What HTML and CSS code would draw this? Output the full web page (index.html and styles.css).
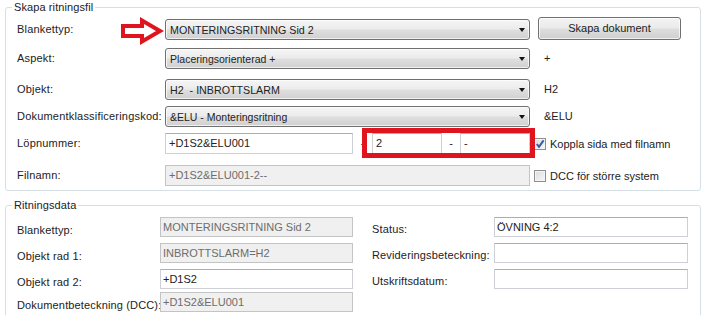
FILE: index.html
```html
<!DOCTYPE html>
<html lang="sv">
<head>
<meta charset="utf-8">
<title>Skapa ritningsfil</title>
<link rel="stylesheet" href="styles.css">
</head>
<body>
<fieldset class="group group-create">
  <legend>Skapa ritningsfil</legend>
  <div class="form-grid">
    <span class="lbl">Blankettyp:</span>
    <div class="combo"><span>MONTERINGSRITNING Sid 2</span><span class="combo-arrow"></span></div>
    <div class="side"><button class="btn" type="button">Skapa dokument</button></div>

    <span class="lbl">Aspekt:</span>
    <div class="combo combo-small"><span>Placeringsorienterad +</span><span class="combo-arrow"></span></div>
    <span class="side side-text">+</span>

    <span class="lbl">Objekt:</span>
    <div class="combo"><span>H2&nbsp; - INBROTTSLARM</span><span class="combo-arrow"></span></div>
    <span class="side side-text">H2</span>

    <span class="lbl">Dokumentklassificeringskod:</span>
    <div class="combo combo-small"><span>&amp;ELU - Monteringsritning</span><span class="combo-arrow"></span></div>
    <span class="side side-text">&amp;ELU</span>

    <span class="lbl">Löpnummer:</span>
    <div class="split">
      <div class="tb tb-main">+D1S2&amp;ELU001</div>
      <span class="dash">-</span>
      <div class="tb tb-part">2</div>
      <span class="dash">-</span>
      <div class="tb tb-part">-</div>
    </div>
    <label class="side check"><span class="cb cb-on"><svg viewBox="0 0 10 10" width="10" height="10"><path d="M1.8 5 L4 7.8 L8.6 1.4" fill="none" stroke="#3a58a8" stroke-width="2"/></svg></span>Koppla sida med filnamn</label>

    <span class="lbl">Filnamn:</span>
    <div class="tb tb-off">+D1S2&amp;ELU001-2--</div>
    <label class="side check"><span class="cb"></span>DCC för större system</label>
  </div>
</fieldset>

<fieldset class="group group-data">
  <legend>Ritningsdata</legend>
  <div class="data-grid">
    <span class="lbl-d">Blankettyp:</span>
    <div class="tb tb-d tb-off">MONTERINGSRITNING Sid 2</div>
    <span class="lbl-d lbl-r">Status:</span>
    <div class="tb tb-d">ÖVNING 4:2</div>

    <span class="lbl-d">Objekt rad 1:</span>
    <div class="tb tb-d tb-off">INBROTTSLARM=H2</div>
    <span class="lbl-d lbl-r">Revideringsbeteckning:</span>
    <div class="tb tb-d"></div>

    <span class="lbl-d">Objekt rad 2:</span>
    <div class="tb tb-d">+D1S2</div>
    <span class="lbl-d lbl-r">Utskriftsdatum:</span>
    <div class="tb tb-d"></div>

    <span class="lbl-d">Dokumentbeteckning (DCC):</span>
    <div class="tb tb-d tb-off">+D1S2&amp;ELU001</div>
  </div>
</fieldset>

<svg class="callout-arrow" width="52" height="34" viewBox="115 14 52 34">
  <path d="M123 26 L142 26 L142 20.5 L160 31 L142 41.5 L142 36 L123 36 Z" fill="#fff" stroke="#e0141e" stroke-width="4" stroke-linejoin="miter"/>
</svg>
<div class="callout-box"></div>
</body>
</html>
```

FILE: styles.css
```css
html, body {
  margin: 0;
  height: 315px;
  overflow: hidden;
  background: #fff;
}

body {
  position: relative;
  box-sizing: border-box;
  padding-top: 1px;
  font-family: "Liberation Sans", Arial, sans-serif;
  font-size: 11px;
  color: #222;
}

.group {
  margin: 0 0 0 5px;
  width: 696px;
  min-width: 0;
  box-sizing: border-box;
  border: 1px solid #d5dfe5;
  border-radius: 3px;
  padding: 5px 0 4px 6px;
}

.group legend {
  padding: 0 2px;
  height: 13px;
  line-height: 13px;
  color: #222;
  letter-spacing: 0.1px;
}

.group-data {
  margin-top: 8px;
  padding-bottom: 20px;
}

/* ---------- Skapa ritningsfil ---------- */
.form-grid {
  margin-left: 5px;
  display: grid;
  grid-template-columns: 148px 365px 1fr;
  grid-template-rows: 29px 31px 27px 27px 32px 21px;
  align-items: start;
}

.lbl {
  line-height: 21px;
  white-space: nowrap;
  letter-spacing: 0.2px;
}

.combo {
  height: 21px;
  box-sizing: border-box;
  border: 1px solid #707070;
  border-radius: 3px;
  background: linear-gradient(#f5f5f5 0%, #ececec 45%, #dedede 55%, #d0d0d0 100%);
  box-shadow: inset 0 0 0 1px rgba(255,255,255,0.7);
  display: flex;
  align-items: center;
  justify-content: space-between;
  padding: 0 4px 0 4px;
  white-space: nowrap;
  font-size: 10.7px;
}

.combo-small span:first-child {
  font-size: 10.5px;
}

.combo-arrow {
  width: 0;
  height: 0;
  border-left: 3.5px solid transparent;
  border-right: 3.5px solid transparent;
  border-top: 4px solid #111;
}

.side {
  display: flex;
  align-items: center;
  height: 21px;
}

.side-text {
  padding-left: 14px;
  line-height: 21px;
}

.btn {
  margin: -3px 0 0 8px;
  width: 143px;
  height: 23px;
  border: 1px solid #707070;
  border-radius: 3px;
  background: linear-gradient(#f3f3f3 0%, #ebebeb 45%, #dddddd 55%, #cfcfcf 100%);
  box-shadow: inset 0 0 0 1px rgba(255,255,255,0.7);
  font-family: inherit;
  font-size: 11px;
  color: #222;
  padding: 0;
}

.tb {
  height: 21px;
  box-sizing: border-box;
  border: 1px solid #cdd0d6;
  border-top-color: #abadb3;
  background: #fff;
  padding: 0 3px;
  line-height: 19px;
  white-space: nowrap;
  overflow: hidden;
}

.tb-off {
  background: #f0f0f0;
  color: #6d6d6d;
  border-color: #c4c4c4;
}

.split {
  display: flex;
  align-items: center;
}

.tb-main {
  width: 188px;
}

.tb-part {
  width: 70px;
}

.dash {
  width: 19px;
  text-align: center;
  line-height: 21px;
}

.dash + .tb-part + .dash {
  width: 18px;
}

.check {
  gap: 4px;
  padding-left: 4px;
}

.cb {
  width: 12px;
  height: 12px;
  box-sizing: border-box;
  border: 1px solid #8f8f8f;
  background: linear-gradient(135deg, #dcdcdc, #f7f7f7);
  box-shadow: inset 0 0 0 1px #f4f4f4;
  display: flex;
  align-items: center;
  justify-content: center;
  flex: none;
}

/* ---------- Ritningsdata ---------- */
.data-grid {
  margin-left: 5px;
  display: grid;
  grid-template-columns: 143px 193px 19px 122px 194px;
  grid-template-rows: 26px 26px 23px 21px;
  align-items: start;
}

.data-grid .lbl-r {
  grid-column: 4;
  padding-top: 2px;
}

.lbl-d {
  line-height: 20px;
  padding-top: 3px;
  white-space: nowrap;
  letter-spacing: 0.15px;
}

.tb-d {
  height: 20px;
  line-height: 18px;
  padding: 0 2px;
}

/* ---------- red annotations ---------- */
.callout-arrow {
  position: absolute;
  left: 115px;
  top: 14px;
}

.callout-box {
  position: absolute;
  left: 362px;
  top: 128px;
  width: 173px;
  height: 30px;
  box-sizing: border-box;
  border: 5px solid #e0141e;
}
```
